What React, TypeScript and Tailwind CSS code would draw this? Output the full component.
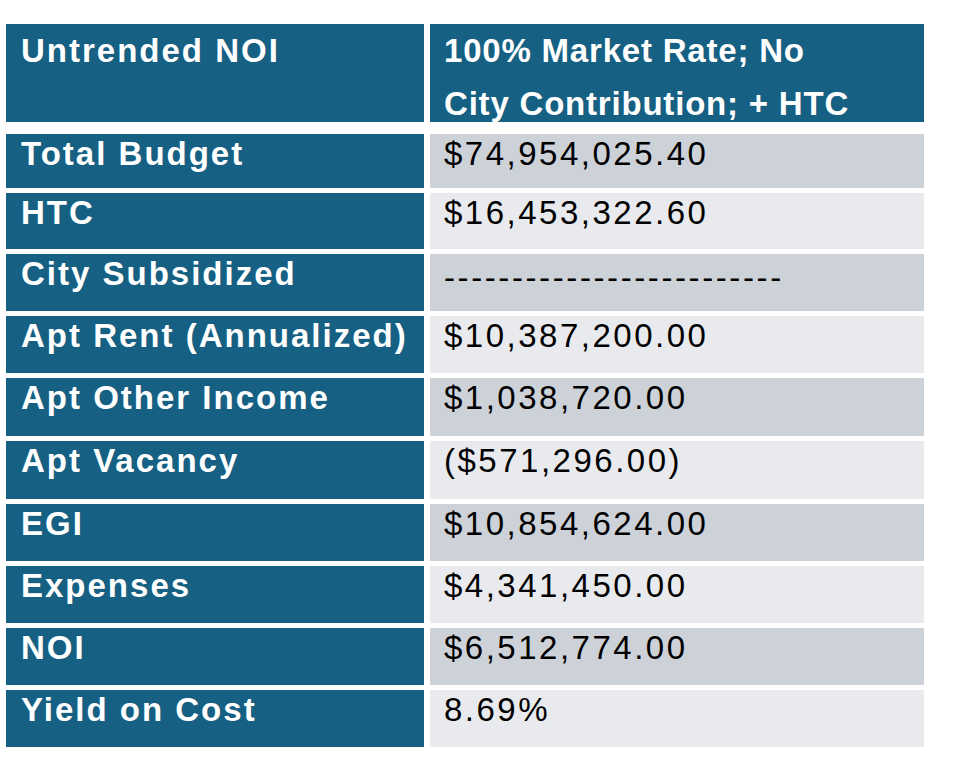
import React from "react";

type Row = { label: string; value: string; h: string; bg: string; dash?: boolean };

const rows: Row[] = [
  { label: "Total Budget", value: "$74,954,025.40", h: "h-[54px]", bg: "bg-[#cdd1d8]" },
  { label: "HTC", value: "$16,453,322.60", h: "h-[56px]", bg: "bg-[#e8eaed]" },
  { label: "City Subsidized", value: "-------------------------", h: "h-[57px]", bg: "bg-[#cdd1d8]", dash: true },
  { label: "Apt Rent (Annualized)", value: "$10,387,200.00", h: "h-[57px]", bg: "bg-[#e8eaed]" },
  { label: "Apt Other Income", value: "$1,038,720.00", h: "h-[58px]", bg: "bg-[#cdd1d8]" },
  { label: "Apt Vacancy", value: "($571,296.00)", h: "h-[58px]", bg: "bg-[#e8eaed]" },
  { label: "EGI", value: "$10,854,624.00", h: "h-[57px]", bg: "bg-[#cdd1d8]" },
  { label: "Expenses", value: "$4,341,450.00", h: "h-[57px]", bg: "bg-[#e8eaed]" },
  { label: "NOI", value: "$6,512,774.00", h: "h-[57px]", bg: "bg-[#cdd1d8]" },
  { label: "Yield on Cost", value: "8.69%", h: "h-[57px]", bg: "bg-[#e8eaed]" },
];

const sans = "font-['Liberation_Sans',Arial,sans-serif]";

export default function App() {
  return (
    <div className={`w-[960px] h-[772px] bg-white pl-[6px] pt-[24px] ${sans}`}>
      <div className="flex flex-col w-[918px]">
        <div className="flex gap-[6px] h-[98px] mb-[12px]">
          <div className="w-[418px] bg-[#166083] overflow-hidden pl-[15px] text-white font-bold text-[33px] leading-[53px] tracking-[2px] whitespace-nowrap">
            Untrended NOI
          </div>
          <div className="flex-1 bg-[#166083] overflow-hidden pl-[14px] text-white font-bold text-[33px] leading-[53px] tracking-[0.8px] whitespace-nowrap">
            100% Market Rate; No
            <br />
            City Contribution; + HTC
          </div>
        </div>
        <div className="flex flex-col gap-[5px]">
          {rows.map((r) => (
            <div key={r.label} className={`flex gap-[6px] ${r.h}`}>
              <div className="w-[418px] bg-[#166083] pl-[15px] pt-[2px] text-white font-bold text-[33px] leading-[36px] tracking-[2px] whitespace-nowrap overflow-hidden">
                {r.label}
              </div>
              <div
                className={`flex-1 ${r.bg} pl-[14px] text-black text-[33px] leading-[36px] whitespace-nowrap overflow-hidden ${
                  r.dash ? "pt-[6px] tracking-[2.6px]" : "pt-[2px] tracking-[2.5px]"
                }`}
              >
                {r.value}
              </div>
            </div>
          ))}
        </div>
      </div>
    </div>
  );
}
